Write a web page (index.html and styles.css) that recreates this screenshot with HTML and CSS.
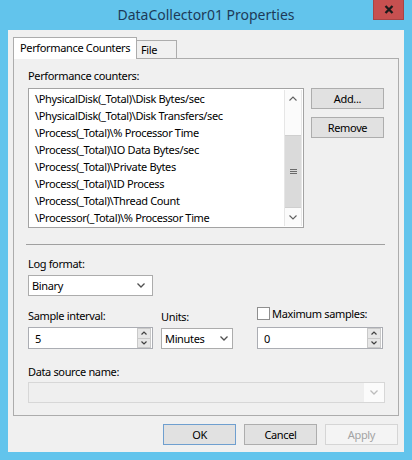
FILE: index.html
```html
<!DOCTYPE html>
<html>
<head>
<meta charset="utf-8">
<title>DataCollector01 Properties</title>
<link rel="stylesheet" href="styles.css">
</head>
<body>
<div class="window">
  <div class="titlebar">
    <div class="title">DataCollector01 Properties</div>
    <div class="close"><svg width="10" height="9" viewBox="0 0 10 9"><path d="M1.5 1 L8.5 8 M8.5 1 L1.5 8" stroke="#1a1a1a" stroke-width="2.3" fill="none"/></svg></div>
  </div>
  <div class="client">
    <div class="tabs">
      <div class="tab active">Performance Counters</div>
      <div class="tab file">File</div>
    </div>
    <div class="panel">
      <div class="label l-counters">Performance counters:</div>
      <div class="counters">
        <div class="listbox">
          <div class="items">
            <div class="item">\PhysicalDisk(_Total)\Disk Bytes/sec</div>
            <div class="item">\PhysicalDisk(_Total)\Disk Transfers/sec</div>
            <div class="item">\Process(_Total)\% Processor Time</div>
            <div class="item">\Process(_Total)\IO Data Bytes/sec</div>
            <div class="item">\Process(_Total)\Private Bytes</div>
            <div class="item">\Process(_Total)\ID Process</div>
            <div class="item">\Process(_Total)\Thread Count</div>
            <div class="item">\Processor(_Total)\% Processor Time</div>
          </div>
          <div class="scrollbar">
            <div class="sb-btn"><svg width="8" height="5" viewBox="0 0 8 5"><polyline points="0.5,4.5 4,1 7.5,4.5" stroke="#606060" stroke-width="1.1" fill="none"/></svg></div>
            <div class="sb-track">
              <div class="sb-thumb"><svg width="7" height="6" viewBox="0 0 7 6"><path d="M0 0.5 H7 M0 2.5 H7 M0 4.5 H7" stroke="#6a6a6a" stroke-width="1"/></svg></div>
            </div>
            <div class="sb-btn"><svg width="8" height="5" viewBox="0 0 8 5"><polyline points="0.5,0.5 4,4 7.5,0.5" stroke="#606060" stroke-width="1.1" fill="none"/></svg></div>
          </div>
        </div>
        <div class="side">
          <div class="btn">Add...</div>
          <div class="btn">Remove</div>
        </div>
      </div>
      <div class="sep"></div>
      <div class="label l-format">Log format:</div>
      <div class="combo format"><span class="combo-text">Binary</span><svg class="chev" width="8" height="5" viewBox="0 0 8 5"><polyline points="0.5,0.5 4,4 7.5,0.5" stroke="#505050" stroke-width="1.3" fill="none"/></svg></div>
      <div class="sample">
        <div class="field f-interval">
          <div class="label">Sample interval:</div>
          <div class="spin-input"><span class="value">5</span>
            <div class="spinner">
              <div class="sp-btn"><svg width="6" height="4" viewBox="0 0 6 4"><polyline points="0.5,3.5 3,1 5.5,3.5" stroke="#404040" stroke-width="1.2" fill="none"/></svg></div>
              <div class="sp-btn"><svg width="6" height="4" viewBox="0 0 6 4"><polyline points="0.5,0.5 3,3 5.5,0.5" stroke="#404040" stroke-width="1.2" fill="none"/></svg></div>
            </div>
          </div>
        </div>
        <div class="field f-units">
          <div class="label">Units:</div>
          <div class="combo units"><span class="combo-text">Minutes</span><svg class="chev" width="8" height="5" viewBox="0 0 8 5"><polyline points="0.5,0.5 4,4 7.5,0.5" stroke="#505050" stroke-width="1.3" fill="none"/></svg></div>
        </div>
        <div class="field f-max">
          <div class="check-label"><span class="checkbox"></span><span class="check-text">Maximum samples:</span></div>
          <div class="spin-input"><span class="value">0</span>
            <div class="spinner">
              <div class="sp-btn"><svg width="6" height="4" viewBox="0 0 6 4"><polyline points="0.5,3.5 3,1 5.5,3.5" stroke="#404040" stroke-width="1.2" fill="none"/></svg></div>
              <div class="sp-btn"><svg width="6" height="4" viewBox="0 0 6 4"><polyline points="0.5,0.5 3,3 5.5,0.5" stroke="#404040" stroke-width="1.2" fill="none"/></svg></div>
            </div>
          </div>
        </div>
      </div>
      <div class="label l-ds">Data source name:</div>
      <div class="combo disabled"><span class="combo-text"></span><div class="chev-box"><svg width="8" height="5" viewBox="0 0 8 5"><polyline points="0.5,0.5 4,4 7.5,0.5" stroke="#bdbdbd" stroke-width="1.3" fill="none"/></svg></div></div>
    </div>
    <div class="footer">
      <div class="btn default">OK</div>
      <div class="btn">Cancel</div>
      <div class="btn off">Apply</div>
    </div>
  </div>
</div>
</body>
</html>
```

FILE: styles.css
```css
* { box-sizing: border-box; }

body {
  margin: 0;
  font-family: "Noto Sans", "Open Sans", sans-serif;
  font-size: 11px;
  letter-spacing: -0.35px;
  color: #000;
}

.window {
  width: 412px;
  height: 460px;
  background: #62c4ec;
  padding: 0 8px 8px;
  display: flex;
  flex-direction: column;
}

.titlebar {
  height: 30px;
  display: grid;
  grid-template-columns: 1fr auto 1fr;
  align-items: start;
}

.title {
  grid-column: 2;
  font-size: 14px;
  letter-spacing: 0;
  line-height: 30px;
  color: #1d3a58;
}

.close {
  grid-column: 3;
  justify-self: end;
  width: 31px;
  height: 20px;
  background: #c75050;
  border: 1px solid #a84444;
  border-top: 0;
  display: flex;
  align-items: center;
  justify-content: center;
}

.client {
  flex: 1;
  background: #f0f0f0;
  display: flex;
  flex-direction: column;
  padding: 7px 5px 7px 5px;
}

/* tabs */
.tabs {
  height: 21px;
  display: flex;
  align-items: flex-end;
}

.tab {
  border: 1px solid #acacac;
  white-space: nowrap;
}

.tab.active {
  position: relative;
  z-index: 1;
  width: 124px;
  height: 22px;
  margin-bottom: -1px;
  background: #ffffff;
  border-bottom: 0;
  padding-left: 6px;
  line-height: 19px;
}

.tab.file {
  width: 40px;
  height: 18px;
  border-left: 0;
  border-bottom: 0;
  background: #f0f0f0;
  padding-left: 4px;
  line-height: 17px;
}

.panel {
  flex: 1;
  border: 1px solid #acacac;
  background: #f0f0f0;
  padding: 0 13px 0 14px;
  display: flex;
  flex-direction: column;
}

.label {
  height: 15px;
  line-height: 15px;
  white-space: nowrap;
}

.l-counters { margin-top: 9px; }

/* counters list */
.counters {
  margin-top: 5px;
  display: flex;
  align-items: flex-start;
  gap: 7px;
}

.listbox {
  width: 276px;
  height: 140px;
  border: 1px solid #a3a3a3;
  background: #fff;
  padding: 1px 1px 1px 0;
  display: flex;
}

.items {
  flex: 1;
  overflow: hidden;
}

.item {
  height: 17px;
  line-height: 17px;
  padding-left: 6px;
  white-space: nowrap;
  overflow: hidden;
}

.scrollbar {
  width: 18px;
  display: flex;
  flex-direction: column;
  border-left: 1px solid #e6e6e6;
  border-right: 1px solid #e6e6e6;
  background: #fbfbfb;
}

.sb-btn {
  height: 17px;
  display: flex;
  align-items: center;
  justify-content: center;
}

.sb-track {
  flex: 1;
  display: flex;
  flex-direction: column;
}

.sb-thumb {
  margin-top: 28px;
  height: 73px;
  background: #dadada;
  border-top: 1px solid #cfcfcf;
  border-bottom: 1px solid #cfcfcf;
  display: flex;
  align-items: center;
  justify-content: center;
}

.side {
  width: 73px;
  display: flex;
  flex-direction: column;
  gap: 8px;
}

.btn {
  height: 21px;
  background: #e1e1e1;
  border: 1px solid #adadad;
  text-align: center;
  line-height: 19px;
  white-space: nowrap;
}

.sep {
  margin-top: 16px;
  margin-left: -2px;
  height: 1px;
  background: #a0a0a0;
}

.l-format { margin-top: 11px; }

/* combos and inputs */
.combo {
  height: 21px;
  border: 1px solid #acacac;
  background: #fff;
  display: flex;
  align-items: center;
  justify-content: space-between;
  padding: 0 7px 0 3px;
}

.combo.format {
  margin-top: 4px;
  width: 125px;
}

.combo.units {
  width: 72px;
  padding-right: 4px;
}

.combo-text {
  line-height: 19px;
}

.sample {
  margin-top: 11px;
  display: flex;
  align-items: flex-end;
}

.field {
  display: flex;
  flex-direction: column;
}

.field .label { margin-bottom: 4px; }

.f-interval { width: 125px; }
.f-units { width: 72px; margin-left: 8px; }
.f-max { width: 126px; margin-left: 24px; }

.check-label {
  height: 13px;
  margin-bottom: 7px;
  display: flex;
  align-items: center;
  gap: 2px;
}

.checkbox {
  width: 13px;
  height: 13px;
  border: 1px solid #8f8f8f;
  background: #fff;
}

.check-text {
  line-height: 13px;
  white-space: nowrap;
}

.spin-input {
  height: 22px;
  border: 1px solid #abadb3;
  background: #fff;
  display: flex;
  align-items: center;
  justify-content: space-between;
  padding: 0 1px 0 6px;
}

.spinner {
  width: 14px;
  height: 20px;
  display: flex;
  flex-direction: column;
}

.sp-btn {
  flex: 1;
  background: #e6e6e6;
  border: 1px solid #c9c9c9;
  display: flex;
  align-items: center;
  justify-content: center;
}

.sp-btn + .sp-btn { border-top: 0; }

.l-ds { margin-top: 15px; }

.combo.disabled {
  margin-top: 3px;
  background: #efefef;
  border-color: #d7d7d7;
  padding: 0;
}

.chev-box {
  width: 20px;
  height: 100%;
  background: #fbfbfb;
  display: flex;
  align-items: center;
  justify-content: center;
}

/* footer */
.footer {
  margin-top: 8px;
  padding-right: 1px;
  display: flex;
  justify-content: flex-end;
  gap: 8px;
}

.footer .btn { width: 73px; }

.btn.default { border-color: #6f9fcf; }

.btn.off {
  background: #f4f4f4;
  border-color: #d5d5d5;
  color: #a3a3a3;
}
```
